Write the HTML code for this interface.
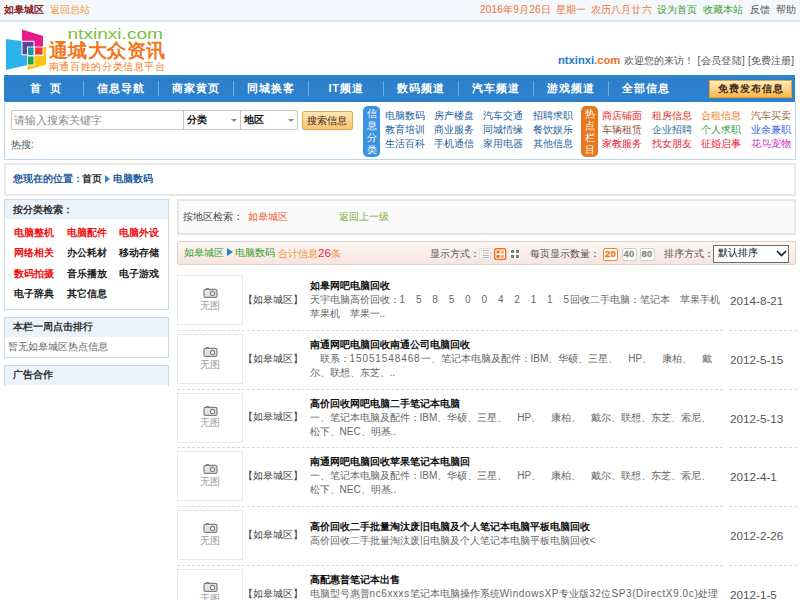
<!DOCTYPE html>
<html><head><meta charset="utf-8">
<style>
*{margin:0;padding:0;box-sizing:border-box}
html,body{width:800px;height:600px;overflow:hidden;background:#fff}
body{position:relative;font-family:"Liberation Sans",sans-serif;font-size:10px;color:#333}
.a{position:absolute;white-space:nowrap;line-height:12px}
.b{font-weight:bold}
.box{position:absolute}
</style></head><body>

<!-- top bar -->
<div class="box" style="left:0;top:0;width:800px;height:22px;background:#f4f8fc;border-bottom:2px solid #dae6f3"></div>
<div class="a b" style="left:4px;top:4px;color:#8a1c1c">如皋城区</div>
<div class="a" style="left:50px;top:4px;color:#f29a30">返回总站</div>
<div class="a" style="left:480px;top:4px;color:#f07032;letter-spacing:.2px;word-spacing:1.6px">2016年9月26日 星期一 农历八月廿六</div>
<div class="a" style="left:657px;top:4px;color:#3c9c2c">设为首页</div>
<div class="a" style="left:703px;top:4px;color:#3c9c2c">收藏本站</div>
<div class="a" style="left:750px;top:4px;color:#555">反馈</div>
<div class="a" style="left:776px;top:4px;color:#555">帮助</div>

<!-- logo -->
<svg class="box" style="left:0;top:22px" width="170" height="54" viewBox="0 22 170 54">
  <polygon points="6,39 28,42 28,65 6,70" fill="#2cb4ea"/>
  <polygon points="22,29.5 43,36 43,47 34,47 34,55 22,55" fill="#ea1a8c"/>
  <rect x="22" y="41.3" width="12" height="13.5" fill="#57479e" stroke="#fff" stroke-width="1"/>
  <polygon points="27.5,56 43,56 43,47 46,47 46,64.7 27.5,70" fill="#fcc611"/>
  <rect x="27.5" y="47" width="6.5" height="8.5" fill="#1c96a6" stroke="#fff" stroke-width="0.9"/>
  <rect x="34.5" y="47" width="8.5" height="8" fill="#ee3a36" stroke="#fff" stroke-width="0.9"/>
  <rect x="27.5" y="56" width="6.5" height="9" fill="#1aa64c" stroke="#fff" stroke-width="0.9"/>
  <text x="67.5" y="38.6" font-family="Liberation Sans" font-size="14.5" fill="#7bc043" textLength="95.5" lengthAdjust="spacingAndGlyphs">ntxinxi.com</text>
  <text x="48.6" y="57.2" font-family="Liberation Sans" font-size="18.6" font-weight="bold" fill="#f2761c" textLength="116.5" lengthAdjust="spacing">通城大众资讯</text>
  <text x="48.6" y="69.6" font-family="Liberation Sans" font-size="10" fill="#f07a20" textLength="116.5" lengthAdjust="spacing">南通百姓的分类信息平台</text>
</svg>

<div class="a b" style="left:558px;top:54px;font-size:11.2px;color:#1a78c8">ntxinxi<span style="color:#f07020">.com</span></div>
<div class="a" style="left:624px;top:55px;color:#555">欢迎您的来访！</div>
<div class="a" style="left:697.5px;top:55px;color:#555;letter-spacing:.35px">[会员登陆]</div>
<div class="a" style="left:748px;top:55px;color:#555;letter-spacing:.1px">[免费注册]</div>

<!-- nav -->
<div class="box" style="left:4px;top:75px;width:791px;height:27px;background:linear-gradient(#2a86d6 0,#2a86d6 2px,#2e80cb 2px,#2e80cb 20px,#2a86d8 21px,#2a86d8 23px,#2e80cb 23px)"></div>
<div class="a b" style="left:8px;top:82px;width:75px;text-align:center;font-size:11.1px;letter-spacing:.75px;text-indent:.75px;line-height:13px;color:#fff">首&nbsp;&nbsp;页</div>
<div class="a b" style="left:83px;top:82px;width:75px;text-align:center;font-size:11.1px;letter-spacing:.75px;text-indent:.75px;line-height:13px;color:#fff">信息导航</div>
<div class="a b" style="left:158px;top:82px;width:75px;text-align:center;font-size:11.1px;letter-spacing:.75px;text-indent:.75px;line-height:13px;color:#fff">商家黄页</div>
<div class="a b" style="left:233px;top:82px;width:75px;text-align:center;font-size:11.1px;letter-spacing:.75px;text-indent:.75px;line-height:13px;color:#fff">同城换客</div>
<div class="a b" style="left:308px;top:82px;width:75px;text-align:center;font-size:11.1px;letter-spacing:.75px;text-indent:.75px;line-height:13px;color:#fff">IT频道</div>
<div class="a b" style="left:383px;top:82px;width:75px;text-align:center;font-size:11.1px;letter-spacing:.75px;text-indent:.75px;line-height:13px;color:#fff">数码频道</div>
<div class="a b" style="left:458px;top:82px;width:75px;text-align:center;font-size:11.1px;letter-spacing:.75px;text-indent:.75px;line-height:13px;color:#fff">汽车频道</div>
<div class="a b" style="left:533px;top:82px;width:75px;text-align:center;font-size:11.1px;letter-spacing:.75px;text-indent:.75px;line-height:13px;color:#fff">游戏频道</div>
<div class="a b" style="left:608px;top:82px;width:75px;text-align:center;font-size:11.1px;letter-spacing:.75px;text-indent:.75px;line-height:13px;color:#fff">全部信息</div>
<div class="box" style="left:83px;top:81px;width:1px;height:15px;background:#64aeec"></div>
<div class="box" style="left:158px;top:81px;width:1px;height:15px;background:#64aeec"></div>
<div class="box" style="left:233px;top:81px;width:1px;height:15px;background:#64aeec"></div>
<div class="box" style="left:308px;top:81px;width:1px;height:15px;background:#64aeec"></div>
<div class="box" style="left:383px;top:81px;width:1px;height:15px;background:#64aeec"></div>
<div class="box" style="left:458px;top:81px;width:1px;height:15px;background:#64aeec"></div>
<div class="box" style="left:533px;top:81px;width:1px;height:15px;background:#64aeec"></div>
<div class="box" style="left:608px;top:81px;width:1px;height:15px;background:#64aeec"></div>
<div class="box" style="left:709px;top:80px;width:83px;height:18px;border:1px solid #f0a030;background:linear-gradient(#feefc4,#f6b84a)"></div>
<div class="a b" style="left:718px;top:83px;letter-spacing:1.1px;color:#4a2c14">免费发布信息</div>



<!-- search area -->
<div class="box" style="left:4px;top:101px;width:792px;height:59px;border:1px solid #bcd6ef;border-top:none"></div>
<div class="box" style="left:11px;top:110px;width:173px;height:20px;border:1px solid #c8c8c8;border-right:none;border-radius:2px 0 0 2px"></div>
<div class="a" style="left:14px;top:113.7px;font-size:10.5px;color:#8a8a8a">请输入搜索关键字</div>
<div class="box" style="left:183px;top:110px;width:58px;height:20px;border:1px solid #c8c8c8;border-right:none"></div>
<div class="box" style="left:240px;top:110px;width:58px;height:20px;border:1px solid #c8c8c8;border-radius:0 2px 2px 0"></div>
<div class="a b" style="left:187px;top:114px;color:#111">分类</div>
<div class="a b" style="left:244px;top:114px;color:#111">地区</div>
<div class="box" style="left:231px;top:119px;width:0;height:0;border-left:3px solid transparent;border-right:3px solid transparent;border-top:3px solid #888"></div>
<div class="box" style="left:288px;top:119px;width:0;height:0;border-left:3px solid transparent;border-right:3px solid transparent;border-top:3px solid #888"></div>
<div class="box" style="left:302px;top:111px;width:51px;height:19px;border:1px solid #eaa64a;border-radius:2px;background:linear-gradient(#fde6b4,#f8c572)"></div>
<div class="a" style="left:307px;top:115px;color:#3a2a1a">搜索信息</div>
<div class="a" style="left:11px;top:139px;color:#555">热搜:</div>

<div class="box" style="left:363px;top:106px;width:17px;height:51px;border-radius:5px;background:#3a92e0"></div>
<div class="a" style="left:366px;top:108px;width:11px;line-height:12px;white-space:normal;color:#fff;text-align:center">信息分类</div>
<div class="a" style="left:384.5px;top:110px;color:#24609e">电脑数码</div>
<div class="a" style="left:433.5px;top:110px;color:#24609e">房产楼盘</div>
<div class="a" style="left:483px;top:110px;color:#24609e">汽车交通</div>
<div class="a" style="left:532.5px;top:110px;color:#24609e">招聘求职</div>
<div class="a" style="left:384.5px;top:124px;color:#24609e">教育培训</div>
<div class="a" style="left:433.5px;top:124px;color:#24609e">商业服务</div>
<div class="a" style="left:483px;top:124px;color:#24609e">同城情缘</div>
<div class="a" style="left:532.5px;top:124px;color:#24609e">餐饮娱乐</div>
<div class="a" style="left:384.5px;top:138px;color:#24609e">生活百科</div>
<div class="a" style="left:433.5px;top:138px;color:#24609e">手机通信</div>
<div class="a" style="left:483px;top:138px;color:#24609e">家用电器</div>
<div class="a" style="left:532.5px;top:138px;color:#24609e">其他信息</div>
<div class="box" style="left:581px;top:106px;width:17px;height:51px;border-radius:5px;background:#e8781e"></div>
<div class="a" style="left:584px;top:108px;width:11px;line-height:12px;white-space:normal;color:#fff;text-align:center">热点栏目</div>
<div class="a" style="left:601.5px;top:110px;color:#e8231e">商店铺面</div>
<div class="a" style="left:651.5px;top:110px;color:#d8302a">租房信息</div>
<div class="a" style="left:701px;top:110px;color:#f07820">合租信息</div>
<div class="a" style="left:750.5px;top:110px;color:#9a6a3a">汽车买卖</div>
<div class="a" style="left:601.5px;top:124px;color:#8a5030">车辆租赁</div>
<div class="a" style="left:651.5px;top:124px;color:#2a6a9a">企业招聘</div>
<div class="a" style="left:701px;top:124px;color:#2a9a3a">个人求职</div>
<div class="a" style="left:750.5px;top:124px;color:#2a5ae0">业余兼职</div>
<div class="a" style="left:601.5px;top:138px;color:#e8203a">家教服务</div>
<div class="a" style="left:651.5px;top:138px;color:#e82030">找女朋友</div>
<div class="a" style="left:701px;top:138px;color:#e82030">征婚启事</div>
<div class="a" style="left:750.5px;top:138px;color:#c030c0">花鸟宠物</div>

<!-- breadcrumb -->
<div class="box" style="left:4px;top:163px;width:792px;height:33px;border:2px solid #e9e9e9"></div>
<div class="a b" style="left:13px;top:173px;color:#1f5c9c">您现在的位置<span style="margin-right:-1.5px">：</span><span style="color:#333">首页</span></div>
<div class="box" style="left:105px;top:175px;width:0;height:0;border-top:4px solid transparent;border-bottom:4px solid transparent;border-left:5px solid #2a8ad0"></div>
<div class="a b" style="left:113px;top:173px;color:#1f5c9c">电脑数码</div>

<!-- sidebar -->
<div class="box" style="left:4px;top:199px;width:165px;height:111px;border:1px solid #c9d8e8"></div>
<div class="box" style="left:5px;top:200px;width:163px;height:19px;background:#eaf2fb"></div>
<div class="a b" style="left:13px;top:204px;color:#333">按分类检索：</div>
<div class="a b" style="left:14px;top:227.0px;color:#f01010">电脑整机</div>
<div class="a b" style="left:67px;top:227.0px;color:#f01010">电脑配件</div>
<div class="a b" style="left:118.5px;top:227.0px;color:#f01010">电脑外设</div>
<div class="a b" style="left:14px;top:247.4px;color:#f01010">网络相关</div>
<div class="a b" style="left:67px;top:247.4px;color:#222">办公耗材</div>
<div class="a b" style="left:118.5px;top:247.4px;color:#222">移动存储</div>
<div class="a b" style="left:14px;top:267.8px;color:#f01010">数码拍摄</div>
<div class="a b" style="left:67px;top:267.8px;color:#222">音乐播放</div>
<div class="a b" style="left:118.5px;top:267.8px;color:#222">电子游戏</div>
<div class="a b" style="left:14px;top:288.2px;color:#222">电子辞典</div>
<div class="a b" style="left:67px;top:288.2px;color:#222">其它信息</div>

<div class="box" style="left:4px;top:317px;width:165px;height:41px;border:1px solid #c9d8e8"></div>
<div class="box" style="left:5px;top:318px;width:163px;height:19px;background:#eaf2fb"></div>
<div class="a b" style="left:13px;top:321px;color:#333">本栏一周点击排行</div>
<div class="a" style="left:8px;top:341px;color:#666">暂无如皋城区热点信息</div>
<div class="box" style="left:4px;top:365px;width:165px;height:21px;border:1px solid #c9d8e8;border-bottom:none"></div>
<div class="box" style="left:5px;top:366px;width:163px;height:19px;background:#eaf2fb"></div>
<div class="a b" style="left:13px;top:369px;color:#333">广告合作</div>

<!-- right panel -->
<div class="box" style="left:177px;top:199px;width:619px;height:36px;border:2px solid #e6e6e6;background:#fafafa"></div>
<div class="a" style="left:183px;top:211px;color:#444">按地区检索：</div>
<div class="a" style="left:248px;top:211px;color:#f05a2a">如皋城区</div>
<div class="a" style="left:339px;top:211px;color:#88a83a">返回上一级</div>

<div class="box" style="left:177px;top:241px;width:619px;height:24px;border:1px solid #d9d2cf;border-radius:2px;background:linear-gradient(#fdf7f4,#f7e5df)"></div>
<div class="a" style="left:183.5px;top:247px;color:#34a02a">如皋城区</div>
<div class="box" style="left:226.5px;top:248px;width:0;height:0;border-top:4.5px solid transparent;border-bottom:4.5px solid transparent;border-left:6px solid #1a88d0"></div>
<div class="a" style="left:235px;top:247px;color:#34a02a">电脑数码</div>
<div class="a" style="left:278px;top:247px;color:#f08c28">合计信息<span style="color:#e8203a;font-size:11.5px">26</span>条</div>

<div class="a" style="left:430px;top:248px;color:#555">显示方式：</div>
<svg class="box" style="left:479px;top:248px" width="42" height="12" viewBox="0 0 42 12">
<rect x="0.5" y="0.5" width="11" height="10.5" fill="#fff" stroke="#dde3ea"/>
<g fill="#b0b0b0"><rect x="4" y="2" width="6" height="1"/><rect x="4" y="4.5" width="6" height="1"/><rect x="4" y="7" width="6" height="1"/><rect x="4" y="9" width="6" height="1"/></g>
<g fill="#d8d8d8"><rect x="1.5" y="2" width="1.5" height="1"/><rect x="1.5" y="4.5" width="1.5" height="1"/><rect x="1.5" y="7" width="1.5" height="1"/><rect x="1.5" y="9" width="1.5" height="1"/></g>
<rect x="15.7" y="0.7" width="11" height="10.8" rx="1.5" fill="#fff" stroke="#f07020" stroke-width="1.4"/>
<rect x="17.5" y="2.5" width="3" height="3" fill="#f36a10"/><rect x="17.5" y="7" width="3" height="3" fill="#f36a10"/>
<rect x="21.5" y="2.5" width="3.5" height="3" fill="#f8b088"/><rect x="21.5" y="7" width="3.5" height="3" fill="#f8b088"/>
<rect x="30.5" y="0.5" width="10.5" height="11" fill="#fff" stroke="#eef0f4"/>
<g fill="#7a7a7a"><rect x="32" y="2" width="3" height="3"/><rect x="37" y="2" width="3" height="3"/><rect x="32" y="7" width="3" height="3"/><rect x="37" y="7" width="3" height="3"/></g>
</svg>
<div class="a" style="left:530px;top:248px;color:#555">每页显示数量：</div>
<div class="box" style="left:603px;top:248px;width:15px;height:13px;border:1px solid #f08a30;border-radius:2px;background:#fff"></div>
<div class="a b" style="left:603px;top:248px;width:15px;text-align:center;font-size:9.5px;letter-spacing:.3px;-webkit-text-stroke:.35px #f07a20;color:#f07a20">20</div>
<div class="box" style="left:621.5px;top:248px;width:15px;height:13px;border:1px solid #d0d0d0;border-radius:2px;background:#fff"></div>
<div class="a b" style="left:621.5px;top:248px;width:15px;text-align:center;font-size:9.5px;letter-spacing:.3px;-webkit-text-stroke:.3px #8a8a8a;color:#8a8a8a">40</div>
<div class="box" style="left:639.5px;top:248px;width:15px;height:13px;border:1px solid #d0d0d0;border-radius:2px;background:#fff"></div>
<div class="a b" style="left:639.5px;top:248px;width:15px;text-align:center;font-size:9.5px;letter-spacing:.3px;-webkit-text-stroke:.3px #8a8a8a;color:#8a8a8a">80</div>
<div class="a" style="left:664px;top:248px;color:#555">排序方式：</div>
<div class="box" style="left:713px;top:245px;width:76px;height:18px;border:1px solid #6a6a6a;background:#fff"></div>
<div class="a" style="left:718px;top:246.5px;color:#111;font-size:10.3px">默认排序</div>
<svg class="box" style="left:776px;top:250px" width="11" height="7" viewBox="0 0 11 7"><polyline points="1,1 5.5,5.5 10,1" fill="none" stroke="#1a1a2a" stroke-width="1.7"/></svg>
<!--ROWS-->
<div class="box" style="left:177px;top:275.2px;width:66px;height:50px;border:1px solid #e9e9e9"></div>
<svg class="box" style="left:203px;top:288.2px" width="15" height="10" viewBox="0 0 15 10"><rect x="1" y="1.4" width="13" height="8" rx="1.5" fill="#e4e4e4" stroke="#808080" stroke-width="1.2"/><rect x="3" y="0" width="3" height="2" fill="#808080"/><circle cx="9.5" cy="5.4" r="2.1" fill="#fff" stroke="#808080" stroke-width="1.2"/></svg>
<div class="a" style="left:200px;top:299.8px;color:#999">无图</div>
<div class="a" style="left:242.5px;top:294.0px;color:#444">【如皋城区】</div>
<div class="a b" style="left:309.5px;top:280.2px;color:#111">如皋网吧电脑回收</div>
<div class="a" style="left:309.5px;top:294.2px;color:#666">天宇电脑高价回收：<span style="letter-spacing:.42px">1　5　8　5　0　0　4　2　1　1　5</span>回收二手电脑：笔记本　苹果手机</div>
<div class="a" style="left:309.5px;top:308.2px;color:#666">苹果机　苹果一..</div>
<div class="a" style="left:730px;top:295.2px;color:#555;font-size:11.7px">2014-8-21</div>
<div class="box" style="left:177px;top:329.8px;width:546px;height:0;border-top:1px dashed #dadada"></div><div class="box" style="left:729px;top:329.8px;width:68px;height:0;border-top:1px dashed #dadada"></div>
<div class="box" style="left:177px;top:333.9px;width:66px;height:50px;border:1px solid #e9e9e9"></div>
<svg class="box" style="left:203px;top:346.9px" width="15" height="10" viewBox="0 0 15 10"><rect x="1" y="1.4" width="13" height="8" rx="1.5" fill="#e4e4e4" stroke="#808080" stroke-width="1.2"/><rect x="3" y="0" width="3" height="2" fill="#808080"/><circle cx="9.5" cy="5.4" r="2.1" fill="#fff" stroke="#808080" stroke-width="1.2"/></svg>
<div class="a" style="left:200px;top:358.5px;color:#999">无图</div>
<div class="a" style="left:242.5px;top:352.7px;color:#444">【如皋城区】</div>
<div class="a b" style="left:309.5px;top:338.9px;color:#111">南通网吧电脑回收南通公司电脑回收</div>
<div class="a" style="left:309.5px;top:352.9px;color:#666">　联系：<span style="letter-spacing:.9px">15051548468</span>一、笔记本电脑及配件：IBM、华硕、三星、　HP、　康柏、　戴</div>
<div class="a" style="left:309.5px;top:366.9px;color:#666">尔、联想、东芝、..</div>
<div class="a" style="left:730px;top:353.9px;color:#555;font-size:11.7px">2012-5-15</div>
<div class="box" style="left:177px;top:388.5px;width:546px;height:0;border-top:1px dashed #dadada"></div><div class="box" style="left:729px;top:388.5px;width:68px;height:0;border-top:1px dashed #dadada"></div>
<div class="box" style="left:177px;top:392.6px;width:66px;height:50px;border:1px solid #e9e9e9"></div>
<svg class="box" style="left:203px;top:405.6px" width="15" height="10" viewBox="0 0 15 10"><rect x="1" y="1.4" width="13" height="8" rx="1.5" fill="#e4e4e4" stroke="#808080" stroke-width="1.2"/><rect x="3" y="0" width="3" height="2" fill="#808080"/><circle cx="9.5" cy="5.4" r="2.1" fill="#fff" stroke="#808080" stroke-width="1.2"/></svg>
<div class="a" style="left:200px;top:417.2px;color:#999">无图</div>
<div class="a" style="left:242.5px;top:411.4px;color:#444">【如皋城区】</div>
<div class="a b" style="left:309.5px;top:397.6px;color:#111">高价回收网吧电脑二手笔记本电脑</div>
<div class="a" style="left:309.5px;top:411.6px;color:#666">一、笔记本电脑及配件：IBM、华硕、三星、　HP、　康柏、　戴尔、联想、东芝、索尼、</div>
<div class="a" style="left:309.5px;top:425.6px;color:#666">松下、NEC、明基..</div>
<div class="a" style="left:730px;top:412.6px;color:#555;font-size:11.7px">2012-5-13</div>
<div class="box" style="left:177px;top:447.2px;width:546px;height:0;border-top:1px dashed #dadada"></div><div class="box" style="left:729px;top:447.2px;width:68px;height:0;border-top:1px dashed #dadada"></div>
<div class="box" style="left:177px;top:451.3px;width:66px;height:50px;border:1px solid #e9e9e9"></div>
<svg class="box" style="left:203px;top:464.3px" width="15" height="10" viewBox="0 0 15 10"><rect x="1" y="1.4" width="13" height="8" rx="1.5" fill="#e4e4e4" stroke="#808080" stroke-width="1.2"/><rect x="3" y="0" width="3" height="2" fill="#808080"/><circle cx="9.5" cy="5.4" r="2.1" fill="#fff" stroke="#808080" stroke-width="1.2"/></svg>
<div class="a" style="left:200px;top:475.9px;color:#999">无图</div>
<div class="a" style="left:242.5px;top:470.1px;color:#444">【如皋城区】</div>
<div class="a b" style="left:309.5px;top:456.3px;color:#111">南通网吧电脑回收苹果笔记本电脑回</div>
<div class="a" style="left:309.5px;top:470.3px;color:#666">一、笔记本电脑及配件：IBM、华硕、三星、　HP、　康柏、　戴尔、联想、东芝、索尼、</div>
<div class="a" style="left:309.5px;top:484.3px;color:#666">松下、NEC、明基..</div>
<div class="a" style="left:730px;top:471.3px;color:#555;font-size:11.7px">2012-4-1</div>
<div class="box" style="left:177px;top:505.9px;width:546px;height:0;border-top:1px dashed #dadada"></div><div class="box" style="left:729px;top:505.9px;width:68px;height:0;border-top:1px dashed #dadada"></div>
<div class="box" style="left:177px;top:510.0px;width:66px;height:50px;border:1px solid #e9e9e9"></div>
<svg class="box" style="left:203px;top:523.0px" width="15" height="10" viewBox="0 0 15 10"><rect x="1" y="1.4" width="13" height="8" rx="1.5" fill="#e4e4e4" stroke="#808080" stroke-width="1.2"/><rect x="3" y="0" width="3" height="2" fill="#808080"/><circle cx="9.5" cy="5.4" r="2.1" fill="#fff" stroke="#808080" stroke-width="1.2"/></svg>
<div class="a" style="left:200px;top:534.6px;color:#999">无图</div>
<div class="a" style="left:242.5px;top:528.8px;color:#444">【如皋城区】</div>
<div class="a b" style="left:309.5px;top:521.0px;color:#111">高价回收二手批量淘汰废旧电脑及个人笔记本电脑平板电脑回收</div>
<div class="a" style="left:309.5px;top:535.0px;color:#666">高价回收二手批量淘汰废旧电脑及个人笔记本电脑平板电脑回收&lt;</div>
<div class="a" style="left:730px;top:530.0px;color:#555;font-size:11.7px">2012-2-26</div>
<div class="box" style="left:177px;top:564.6px;width:546px;height:0;border-top:1px dashed #dadada"></div><div class="box" style="left:729px;top:564.6px;width:68px;height:0;border-top:1px dashed #dadada"></div>
<div class="box" style="left:177px;top:568.7px;width:66px;height:50px;border:1px solid #e9e9e9"></div>
<svg class="box" style="left:203px;top:581.7px" width="15" height="10" viewBox="0 0 15 10"><rect x="1" y="1.4" width="13" height="8" rx="1.5" fill="#e4e4e4" stroke="#808080" stroke-width="1.2"/><rect x="3" y="0" width="3" height="2" fill="#808080"/><circle cx="9.5" cy="5.4" r="2.1" fill="#fff" stroke="#808080" stroke-width="1.2"/></svg>
<div class="a" style="left:200px;top:593.3px;color:#999">无图</div>
<div class="a" style="left:242.5px;top:587.5px;color:#444">【如皋城区】</div>
<div class="a b" style="left:309.5px;top:573.7px;color:#111">高配惠普笔记本出售</div>
<div class="a" style="left:309.5px;top:587.7px;color:#666">电脑型号惠普<span style="letter-spacing:.6px">nc6xxxs</span>笔记本电脑操作系统<span style="letter-spacing:.6px">WindowsXP</span>专业版<span style="letter-spacing:.6px">32</span>位<span style="letter-spacing:.6px">SP3(DirectX9.0c)</span>处理</div>
<div class="a" style="left:309.5px;top:601.7px;color:#666">器</div>
<div class="a" style="left:730px;top:588.7px;color:#555;font-size:11.7px">2012-1-5</div>
<!--/ROWS-->
</body></html>
